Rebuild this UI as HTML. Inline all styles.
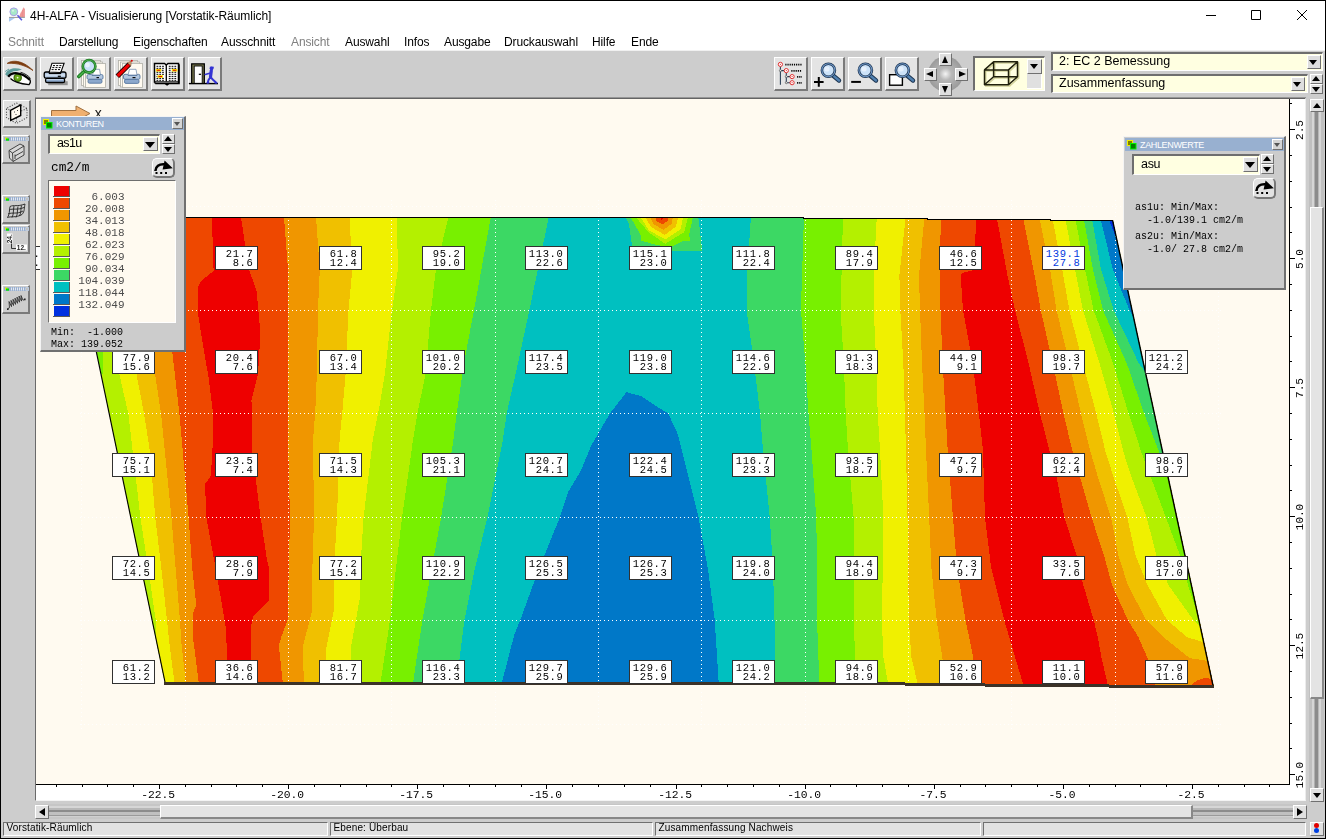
<!DOCTYPE html>
<html><head><meta charset="utf-8"><title>4H-ALFA</title>
<style>
html,body{margin:0;padding:0}
body{width:1326px;height:839px;position:relative;overflow:hidden;background:#fff;font-family:"Liberation Sans",sans-serif;color:#000}
div,span,svg{position:absolute;box-sizing:border-box}
.g{background:#cdcdcd}
.mi{top:33.5px;font-size:12px;line-height:16px;white-space:nowrap;letter-spacing:-0.12px}
.dis{color:#808080}
.rb{background:#dedede;border-top:1px solid #fff;border-left:1px solid #fff;border-right:2px solid #7a7a7a;border-bottom:2px solid #7a7a7a}
.rb1{background:#dedede;border-top:1px solid #fff;border-left:1px solid #fff;border-right:1px solid #707070;border-bottom:1px solid #707070}
.sunk{border-top:2px solid #6e6e6e;border-left:2px solid #6e6e6e;border-right:1px solid #fff;border-bottom:1px solid #fff}
.combo{background:#ffffe1;font-size:12.5px;white-space:nowrap}
.vb{width:43px;height:24px;background:#fff;border:1px solid #3a2e2e;font-family:"Liberation Mono",monospace;font-size:10.5px;letter-spacing:0.62px;line-height:9px;text-align:right;padding:3px 3.6px 0 0;white-space:nowrap;color:#000}
.vb.bl{color:#0038e0;filter:none}
.vb,.mono,.bl_,.rl_ span,.mi,#ttl,.stt,.combo span{filter:grayscale(1)}
.mono{font-family:"Liberation Mono",monospace;white-space:pre}
.tk{width:1px;background:#000}
.tkr{height:1px;background:#000}
.bl_{width:60px;text-align:center;font-family:"Liberation Mono",monospace;font-size:11.3px;line-height:12px;white-space:pre}
.rl_{width:0;height:0}
.rl_ span{display:block;left:-30px;top:-6px;width:60px;height:12px;text-align:center;font-family:"Liberation Mono",monospace;font-size:11px;line-height:12px;transform:rotate(-90deg);white-space:pre}
.arr{width:0;height:0;border-style:solid}
.ptitle{background:#98b0d0;color:#fff;font-size:9px;line-height:12px;white-space:nowrap;letter-spacing:-0.35px}
</style></head><body>
<!-- title bar -->
<div style="left:0;top:0;width:1326px;height:839px;border:1px solid #000;z-index:50;pointer-events:none"></div>
<svg style="left:0px;top:0px" width="30" height="30" viewBox="0 0 30 30"><polygon points="9,17.900 15,17.900 9,21.800" fill="#a8c8f0"/><polygon points="18.800,17 23.500,7.200 24.900,9 24.900,17" fill="#f0a0a0"/><path d="M21 12.500 V17 M22.500 10 V17 M24 9 V17" stroke="#e88080" stroke-width="0.600"/><path d="M9 17.400 H24.900" stroke="#8a8a8a" stroke-width="0.900"/><circle cx="13.800" cy="11.800" r="3.900" fill="#a8e8c8" stroke="#a8a0e8" stroke-width="1"/><circle cx="13" cy="10.800" r="1" fill="#d8f4e8"/><path d="M17.500 15.300 L21.900 20.200" stroke="#5858e0" stroke-width="1.600"/></svg>
<div id="ttl" style="left:30px;top:8px;font-size:12px;line-height:16px;white-space:nowrap;letter-spacing:-0.04px">4H-ALFA - Visualisierung [Vorstatik-Räumlich]</div>
<svg style="left:1200px;top:5px" width="115" height="22" viewBox="0 0 115 22"><path d="M6 10.5 H16 M51.5 5.5 H60.5 V14.5 H51.5 Z M97 5 L107 15 M107 5 L97 15" fill="none" stroke="#000" stroke-width="1"/></svg>
<!-- menu -->
<div class="mi dis" id="m0" style="left:8px">Schnitt</div>
<div class="mi" id="m1" style="left:59px">Darstellung</div>
<div class="mi" id="m2" style="left:133px">Eigenschaften</div>
<div class="mi" id="m3" style="left:221px">Ausschnitt</div>
<div class="mi dis" id="m4" style="left:291px">Ansicht</div>
<div class="mi" id="m5" style="left:345px">Auswahl</div>
<div class="mi" id="m6" style="left:404px">Infos</div>
<div class="mi" id="m7" style="left:444px">Ausgabe</div>
<div class="mi" id="m8" style="left:504px">Druckauswahl</div>
<div class="mi" id="m9" style="left:592px">Hilfe</div>
<div class="mi" id="m10" style="left:631px">Ende</div>
<!-- grey chrome -->
<div class="g" style="left:1px;top:51px;width:1324px;height:787px"></div>
<div style="left:1px;top:50px;width:1324px;height:1px;background:#f0f0f0"></div>
<!-- toolbar buttons -->
<div class="rb" style="left:3px;top:57px;width:34px;height:34px;background:#e4e4e4"><svg width="34" height="34" viewBox="0 0 34 34" style="left:-1px;top:-1px">
<path d="M4.200 6.400 C9 3 19 2.500 30 13.500 C24 9.500 15 5.500 4.200 6.400 Z" fill="#7c3c10" stroke="#7c3c10" stroke-width="0.800"/>
<path d="M2.500 16.500 C6 10.500 13 10.500 19 12.500 L14 14 C10 13.500 7 15.500 4 19.500 Z" fill="#5c9c9c"/>
<path d="M2.200 14.500 L6 12 M2.500 17.500 L7 13.500" stroke="#5c9c9c" stroke-width="1"/>
<path d="M7.500 21.300 C11 16.500 19 16 27 22.800 C27.600 25 27 26.800 26 27.600 C19 27 12 25.500 7.500 21.300 Z" fill="#fff"/>
<circle cx="14.700" cy="20.800" r="3.600" fill="#68a818" stroke="#3c6c08" stroke-width="1.300"/><circle cx="14.600" cy="20.600" r="0.900" fill="#f0f8e0"/>
<path d="M5.200 19.800 C9 14.600 18 14.600 27 22.800" fill="none" stroke="#000" stroke-width="2.300"/>
<path d="M7.500 21.500 C11 25.300 19 27 26 27.700 C27.300 26.500 27.700 24.500 27 22.800" fill="none" stroke="#000" stroke-width="1.200"/>
<path d="M17.500 15.300 C21.500 16.300 25 18.500 27.500 21.300" fill="none" stroke="#000" stroke-width="0.900"/>
</svg></div>
<div class="rb" style="left:40px;top:57px;width:34px;height:34px;background:#e4e4e4"><svg width="34" height="34" viewBox="0 0 34 34" style="left:-1px;top:-1px">
<path d="M7 23 H26.500 V27 H7 Z" fill="#000" opacity=".35" transform="translate(1.200,1.200)"/>
<polygon points="12,6.200 24.100,6.200 20.800,15.500 9.200,15" fill="#fff" stroke="#000" stroke-width="1.100"/>
<path d="M13 8.600 H22 M12.300 10.600 H21.300 M11.600 12.600 H20.600" stroke="#000" stroke-width="1" stroke-dasharray="2 1.200"/>
<path d="M6 15 H9 L9.500 16.500 H20.500 L21 15 H24 Q26 15 26 17 V19.500 Q26 21.200 24 21.200 H6 Q4.200 21.200 4.200 19.500 V17 Q4.200 15 6 15 Z" fill="#b4c8e0" stroke="#000" stroke-width="1.300"/>
<path d="M5.500 18 H25" stroke="#dce8f4" stroke-width="1.200"/>
<rect x="5.600" y="21.300" width="19" height="4.200" rx="1.600" fill="#8ca8cc" stroke="#000" stroke-width="1.300"/>
<path d="M6.500 22.600 H23.500" stroke="#c4d4e8" stroke-width="1"/>
<path d="M17.800 19.300 H20.800" stroke="#000" stroke-width="1.200"/>
</svg></div>
<div class="rb" style="left:77px;top:57px;width:34px;height:34px;background:#e4e4e4"><svg width="34" height="34" viewBox="0 0 34 34" style="left:-1px;top:-1px">
<rect x="4.500" y="3.500" width="19" height="25" fill="#fffaf0" stroke="#b0b0a8" stroke-width="0.800"/><rect x="6.500" y="5" width="19" height="25" fill="#fffaf0" stroke="#b0b0a8" stroke-width="0.800"/><rect x="8.500" y="6.500" width="20" height="24" fill="#fffaf0" stroke="#b0b0a8" stroke-width="0.800"/>
<polygon points="17,12.300 22.600,12.300 23.500,18 15.500,18" fill="#fff" stroke="#7890b0" stroke-width="0.800"/>
<path d="M11.500 17.500 H14.500 L15 18.500 H23 L23.500 17.500 H24.500 Q26 17.500 26 19 V21 Q26 22.300 24.500 22.300 H11.500 Q10 22.300 10 21 V19 Q10 17.500 11.500 17.500 Z" fill="#b4c8e0" stroke="#5878a0" stroke-width="0.900"/>
<rect x="11" y="22.400" width="14" height="3.800" rx="1.500" fill="#8ca8cc" stroke="#5878a0" stroke-width="0.900"/>
<path d="M19.500 20.600 H22" stroke="#000" stroke-width="1.100"/>
<path d="M6.800 14.800 L1.800 19.500" stroke="#1c7c24" stroke-width="3.600" stroke-linecap="round"/><path d="M6.800 14.800 L2 19.300" stroke="#48b048" stroke-width="1.600" stroke-linecap="round"/>
<circle cx="12.100" cy="9.300" r="6.300" fill="#c8e0f8" stroke="#1c7c24" stroke-width="2.600"/><circle cx="12.100" cy="9.300" r="6.300" fill="none" stroke="#58b858" stroke-width="0.900"/><circle cx="10.500" cy="8" r="2.400" fill="#e8f2fc"/>
</svg></div>
<div class="rb" style="left:114px;top:57px;width:34px;height:34px;background:#e4e4e4"><svg width="34" height="34" viewBox="0 0 34 34" style="left:-1px;top:-1px">
<rect x="4.500" y="3.500" width="19" height="25" fill="#fffaf0" stroke="#b0b0a8" stroke-width="0.800"/><rect x="6.500" y="5" width="19" height="25" fill="#fffaf0" stroke="#b0b0a8" stroke-width="0.800"/><rect x="8.500" y="6.500" width="20" height="24" fill="#fffaf0" stroke="#b0b0a8" stroke-width="0.800"/>
<polygon points="15.500,12.300 22,12.300 23,18 14,18" fill="#fff" stroke="#7890b0" stroke-width="0.800"/>
<path d="M11 17.300 H13.500 L14 18.500 H23 L23.500 17.300 H24.500 Q26 17.300 26 19 V21 Q26 22.300 24.500 22.300 H11 Q9.500 22.300 9.500 21 V19 Q9.500 17.300 11 17.300 Z" fill="#b4c8e0" stroke="#5878a0" stroke-width="0.900"/>
<rect x="10.500" y="22.400" width="14.500" height="4" rx="1.500" fill="#8ca8cc" stroke="#5878a0" stroke-width="0.900"/>
<path d="M18.500 20.600 H21.500" stroke="#000" stroke-width="1.100"/>
<path d="M3.300 19.300 L15.300 7.300" stroke="#000" stroke-width="5"/><path d="M3.600 19 L15 7.600" stroke="#ee0000" stroke-width="3.400"/>
<polygon points="13.500,5.800 17.200,4 17,8.800" fill="#d8a070" stroke="#805030" stroke-width="0.500"/><circle cx="17.800" cy="3.800" r="1" fill="#e00000"/>
</svg></div>
<div class="rb" style="left:151px;top:57px;width:34px;height:34px;background:#e4e4e4"><svg width="34" height="34" viewBox="0 0 34 34" style="left:-1px;top:-1px">
<path d="M3.500 6.500 H13.500 L15.300 8 L17 6.500 H28 V26.500 H17.500 L15.300 28 L13 26.500 H3.500 Z" fill="#000" transform="translate(0.800,0.800)"/>
<path d="M3.500 6.500 H13.500 L15.300 8 L17 6.500 H27.500 V25 H3.500 Z" fill="#fff" stroke="#000" stroke-width="1.500"/><path d="M15.300 8 V27" stroke="#000" stroke-width="1.300"/><path d="M3.500 25.700 H27.800" stroke="#000" stroke-width="2"/><path d="M4.500 25.200 H26.800" stroke="#bbb" stroke-width="0.800"/>
<rect x="4.800" y="12" width="5.500" height="2.600" fill="#ffee00"/><rect x="6.500" y="18.200" width="5.500" height="2.600" fill="#ffee00"/><rect x="20.800" y="12" width="5.500" height="2.600" fill="#ffee00"/>
<path d="M5.500 9.300 H13 M5.500 11.300 H13 M10.800 13.300 H13 M5.500 15.300 H13 M5.500 17.300 H13 M5.500 19.400 H6.300 M5.500 21.400 H13 M5.500 23.300 H13 M17.800 9.300 H25.500 M17.800 11.300 H25.500 M17.800 13.300 H20.500 M17.800 15.300 H25.500 M17.800 17.300 H25.500 M17.800 19.400 H25.500 M17.800 21.400 H25.500 M17.800 23.300 H25.500" stroke="#000" stroke-width="1" stroke-dasharray="1.800 1"/>
<path d="M5.800 13.300 H9.300 M7.500 19.500 H11 M21.800 13.300 H25.300" stroke="#e00000" stroke-width="1.100"/>
</svg></div>
<div class="rb" style="left:188px;top:57px;width:34px;height:34px;background:#e4e4e4"><svg width="34" height="34" viewBox="0 0 34 34" style="left:-1px;top:-1px">
<path d="M3.700 26.400 V6.800 H16.300 V26.400" fill="#7c7c50" stroke="#000" stroke-width="1.300"/>
<rect x="6.200" y="9" width="8" height="17.400" fill="#fff" stroke="#000" stroke-width="0.900"/>
<path d="M10.800 17.300 H13" stroke="#000" stroke-width="1.200"/>
<path d="M0.900 26.600 H30" stroke="#000" stroke-width="1.400"/>
<g fill="none" stroke="#3434d4" stroke-linecap="round" stroke-linejoin="round"><path d="M23.300 13.500 L22.500 20" stroke-width="3.200"/><path d="M22.600 16 L17.200 17.400" stroke-width="1.500"/><path d="M22.500 20 L20.500 23 L19.800 25.600 M22.500 20 L25.500 23.300 L28 25.500" stroke-width="2"/><path d="M19 25.800 H21 M27 25.800 H29" stroke-width="1.200"/></g>
<circle cx="23.600" cy="11.300" r="1.900" fill="#3434d4"/><path d="M21.800 10.300 H25.800" stroke="#3434d4" stroke-width="1.200"/>
</svg></div>
<!-- right side toolbar -->
<div class="rb" style="left:774px;top:57px;width:34px;height:34px;background:#e4e4e4"><svg width="34" height="34" viewBox="0 0 34 34" style="left:-1px;top:-1px"><path d="M6.400 9.500 V27.800 M6.400 13.600 H10 M12.300 16 V25.700 M12.300 19.600 H16 M12.300 25.700 H16" stroke="#2c4058" stroke-width="1.100" fill="none"/>
<g fill="#fff" stroke="#e03030" stroke-width="1"><circle cx="6.400" cy="7.400" r="2.100"/><circle cx="12.300" cy="13.600" r="2.100"/><circle cx="18.100" cy="19.600" r="2.100"/><circle cx="18.100" cy="25.700" r="2.100"/></g>
<g fill="#e03030"><rect x="5.900" y="6.900" width="1" height="1"/><rect x="11.800" y="13.100" width="1" height="1"/><rect x="17.600" y="19.100" width="1" height="1"/><rect x="17.600" y="25.200" width="1" height="1"/></g>
<g fill="#fff" stroke="#555" stroke-width="0.700"><circle cx="6.400" cy="13.600" r="1"/><circle cx="12.300" cy="19.600" r="1"/><circle cx="12.300" cy="25.700" r="1"/></g>
<path d="M11.300 7.600 H28 M17.300 13.800 H28 M23.100 19.800 H28 M23.100 25.900 H28" stroke="#000" stroke-width="1.800" stroke-dasharray="1.200 0.950"/></svg></div>
<div class="rb" style="left:811px;top:57px;width:34px;height:34px;background:#e4e4e4"><svg width="34" height="34" viewBox="0 0 34 34" style="left:-1px;top:-1px"><path d="M22.300 18.700 L28 23.500" stroke="#1c3450" stroke-width="4.400" stroke-linecap="round"/><path d="M22.300 18.700 L28 23.500" stroke="#5080b0" stroke-width="2.400" stroke-linecap="round"/>
<circle cx="17.400" cy="13.200" r="6.500" fill="#cce2f8" stroke="#1c3450" stroke-width="2.600"/><circle cx="17.400" cy="13.200" r="6.500" fill="none" stroke="#7098c8" stroke-width="1.100"/><circle cx="16" cy="12" r="2.600" fill="#e6f0fc"/><path d="M3 24.900 H12.600 M7.800 20.100 V29.800" stroke="#000" stroke-width="2"/></svg></div>
<div class="rb" style="left:848px;top:57px;width:34px;height:34px;background:#e4e4e4"><svg width="34" height="34" viewBox="0 0 34 34" style="left:-1px;top:-1px"><path d="M22.300 18.700 L28 23.500" stroke="#1c3450" stroke-width="4.400" stroke-linecap="round"/><path d="M22.300 18.700 L28 23.500" stroke="#5080b0" stroke-width="2.400" stroke-linecap="round"/>
<circle cx="17.400" cy="13.200" r="6.500" fill="#cce2f8" stroke="#1c3450" stroke-width="2.600"/><circle cx="17.400" cy="13.200" r="6.500" fill="none" stroke="#7098c8" stroke-width="1.100"/><circle cx="16" cy="12" r="2.600" fill="#e6f0fc"/><path d="M3.200 24.900 H12.900" stroke="#000" stroke-width="2"/></svg></div>
<div class="rb" style="left:885px;top:57px;width:34px;height:34px;background:#e4e4e4"><svg width="34" height="34" viewBox="0 0 34 34" style="left:-1px;top:-1px"><rect x="4.600" y="17.700" width="12.800" height="10.500" fill="#fff" stroke="#000" stroke-width="1.400"/><path d="M22.300 18.700 L28 23.500" stroke="#1c3450" stroke-width="4.400" stroke-linecap="round"/><path d="M22.300 18.700 L28 23.500" stroke="#5080b0" stroke-width="2.400" stroke-linecap="round"/>
<circle cx="17.400" cy="13.200" r="6.500" fill="#cce2f8" stroke="#1c3450" stroke-width="2.600"/><circle cx="17.400" cy="13.200" r="6.500" fill="none" stroke="#7098c8" stroke-width="1.100"/><circle cx="16" cy="12" r="2.600" fill="#e6f0fc"/></svg></div>
<!-- nav pad -->
<svg style="left:924px;top:52px" width="44" height="44" viewBox="0 0 44 44"><defs><radialGradient id="rg"><stop offset="0" stop-color="#f4f4f4"/><stop offset=".35" stop-color="#b8b8b8"/><stop offset="1" stop-color="#9a9a9a"/></radialGradient></defs><circle cx="21.500" cy="22" r="17.500" fill="url(#rg)"/></svg>
<div class="rb1" style="left:939px;top:53px;width:13px;height:13px"></div><div class="arr" style="left:942px;top:56px;border-width:0 3.500px 7px 3.500px;border-color:transparent transparent #000 transparent"></div>
<div class="rb1" style="left:939px;top:83px;width:13px;height:13px"></div><div class="arr" style="left:942px;top:86px;border-width:7px 3.500px 0 3.500px;border-color:#000 transparent transparent transparent"></div>
<div class="rb1" style="left:924px;top:68px;width:13px;height:13px"></div><div class="arr" style="left:926px;top:71px;border-width:3.500px 7px 3.500px 0;border-color:transparent #000 transparent transparent"></div>
<div class="rb1" style="left:955px;top:68px;width:13px;height:13px"></div><div class="arr" style="left:959px;top:71px;border-width:3.500px 0 3.500px 7px;border-color:transparent transparent transparent #000"></div>
<!-- 3D box selector -->
<div class="sunk" style="left:973px;top:56px;width:72px;height:35px;background:#ffffe1"></div>
<svg style="left:982px;top:59px" width="40" height="30" viewBox="0 0 40 30"><path d="M2.500 10.900 H26.500 V25.800 H2.500 Z M11.600 2.700 H35.500 V17.700 H11.600 Z M2.500 10.900 L11.600 2.700 M26.500 10.900 L35.500 2.700 M26.500 25.800 L35.500 17.700 M2.500 25.800 L11.600 17.700" fill="none" stroke="#d4d49c" stroke-width="1.500" transform="translate(1.200,1.200)"/><path d="M2.500 10.900 H26.500 V25.800 H2.500 Z M11.600 2.700 H35.500 V17.700 H11.600 Z M2.500 10.900 L11.600 2.700 M26.500 10.900 L35.500 2.700 M26.500 25.800 L35.500 17.700 M2.500 25.800 L11.600 17.700" fill="none" stroke="#20200c" stroke-width="1.500" stroke-linejoin="round"/></svg>
<div class="rb1" style="left:1027px;top:59px;width:15px;height:15px"></div><div class="arr" style="left:1030px;top:64px;border-width:5px 4.500px 0 4.500px;border-color:#000 transparent transparent transparent"></div>
<div style="left:1027px;top:74px;width:15px;height:15px;background:#e0e0e0;border-right:1px solid #fff;border-bottom:1px solid #fff"></div>
<!-- combos -->
<div class="sunk combo" style="left:1051px;top:52px;width:272px;height:19px"><span style="left:6px;top:-1px;line-height:16px" id="cb1">2: EC 2 Bemessung</span></div>
<div class="rb1" style="left:1307px;top:55px;width:14px;height:14px"></div><div class="arr" style="left:1309px;top:60px;border-width:5px 4.500px 0 4.500px;border-color:#000 transparent transparent transparent"></div>
<div class="sunk combo" style="left:1051px;top:74px;width:257px;height:19px"><span style="left:6px;top:-1px;line-height:16px" id="cb2">Zusammenfassung</span></div>
<div class="rb1" style="left:1291px;top:77px;width:14px;height:14px"></div><div class="arr" style="left:1293px;top:82px;border-width:5px 4.500px 0 4.500px;border-color:#000 transparent transparent transparent"></div>
<div class="rb1" style="left:1310px;top:74px;width:13px;height:10px"></div><div class="arr" style="left:1312px;top:76px;border-width:0 4.500px 5px 4.500px;border-color:transparent transparent #000 transparent"></div>
<div class="rb1" style="left:1310px;top:84px;width:13px;height:10px"></div><div class="arr" style="left:1312px;top:87px;border-width:5px 4.500px 0 4.500px;border-color:#000 transparent transparent transparent"></div>

<!-- canvas -->
<div style="left:35px;top:97px;width:1271px;height:704px;background:#fff;border-top:2px solid #646464;border-left:1px solid #6a6a6a;border-right:1px solid #ececec;border-bottom:1px solid #f4f4f4"></div>
<div style="left:35px;top:97px;width:1271px;height:1px;background:#969696"></div>
<div style="left:36px;top:99px;width:1253px;height:685px;background:#fffaf0;overflow:hidden" id="cv">
<svg style="left:-36px;top:-99px" width="1326" height="839" viewBox="0 0 1326 839" shape-rendering="crispEdges">
<defs><clipPath id="q"><polygon points="68.5,217 803,217 803,218 927,218 927,219 1050,219 1050,220 1112.6,220 1213.6,687 1213.6,688 1109,688 1109,687 985,687 985,686 905,686 905,685 165.4,685"/></clipPath></defs>
<g stroke="#fff" stroke-width="1" stroke-dasharray="1 3" fill="none" opacity=".9"><line x1="81.5" y1="200" x2="81.5" y2="730" /><line x1="185.5" y1="200" x2="185.5" y2="730" /><line x1="288.5" y1="200" x2="288.5" y2="730" /><line x1="391.5" y1="200" x2="391.5" y2="730" /><line x1="495.5" y1="200" x2="495.5" y2="730" /><line x1="598.5" y1="200" x2="598.5" y2="730" /><line x1="701.5" y1="200" x2="701.5" y2="730" /><line x1="805.5" y1="200" x2="805.5" y2="730" /><line x1="908.5" y1="200" x2="908.5" y2="730" /><line x1="1011.5" y1="200" x2="1011.5" y2="730" /><line x1="1115.5" y1="200" x2="1115.5" y2="730" /><line x1="1218.5" y1="200" x2="1218.5" y2="730" /><line x1="80" y1="206.5" x2="1222" y2="206.5" /><line x1="80" y1="310.5" x2="1222" y2="310.5" /><line x1="80" y1="413.5" x2="1222" y2="413.5" /><line x1="80" y1="517.5" x2="1222" y2="517.5" /><line x1="80" y1="620.5" x2="1222" y2="620.5" /><line x1="80" y1="724.5" x2="1222" y2="724.5" /></g>
<g clip-path="url(#q)">
<rect x="50" y="200" width="1200" height="500" fill="#78f000"/>
<polygon points="75.0,205.0 75.0,216.0 102.8,353.0 102.8,372.0 98.0,400.0 98.0,695.0 1260.0,695.0 1260.0,205.0" fill="#b4f000"/>
<polygon points="82.9,205.0 82.9,216.0 114.4,353.0 120.4,379.0 128.3,413.4 140.5,518.0 148.1,568.0 155.8,620.4 156.0,638.0 150.0,650.0 150.0,695.0 1260.0,695.0 1260.0,205.0" fill="#f0f000"/>
<polygon points="106.4,205.0 106.4,216.0 132.4,353.0 137.4,379.0 144.0,413.4 150.0,452.0 155.3,518.0 161.3,568.0 167.0,620.4 169.0,640.0 174.4,682.4 174.4,695.0 1260.0,695.0 1260.0,205.0" fill="#f0c000"/>
<polygon points="131.4,205.0 131.4,216.0 151.9,353.0 155.8,379.0 161.0,413.4 171.5,518.0 175.6,568.0 180.0,620.4 181.1,640.0 185.8,682.4 185.8,695.0 1260.0,695.0 1260.0,205.0" fill="#f09600"/>
<polygon points="156.5,205.0 156.5,216.0 172.4,353.0 175.4,379.0 179.4,413.4 188.7,518.0 192.2,568.0 196.3,605.0 193.4,612.0 193.3,640.0 198.7,682.4 198.7,695.0 1260.0,695.0 1260.0,205.0" fill="#ee4800"/>
<polygon points="211.8,205.0 211.8,216.0 213.6,270.9 200.7,281.4 197.6,287.5 197.6,311.6 204.3,353.0 208.2,375.0 213.0,413.4 213.0,440.0 210.8,476.0 205.0,484.0 206.5,518.0 215.6,568.0 222.0,605.0 226.3,631.0 226.8,660.0 226.8,695.0 1260.0,695.0 1260.0,205.0" fill="#ee0000"/>
<polygon points="240.8,205.0 240.8,216.0 248.9,269.4 256.5,290.5 260.4,332.7 259.3,353.0 258.0,374.0 251.4,400.0 252.2,413.0 252.0,450.0 260.7,518.0 267.0,560.0 269.2,568.0 269.2,600.0 253.0,616.8 250.6,629.0 251.1,660.0 251.1,695.0 1260.0,695.0 1260.0,205.0" fill="#ee4800"/>
<polygon points="283.9,205.0 283.9,216.0 288.0,269.0 288.0,310.0 288.0,375.0 288.0,440.0 290.0,518.0 288.8,568.0 287.6,620.0 281.6,636.0 278.8,645.0 282.8,683.0 282.8,695.0 1260.0,695.0 1260.0,205.0" fill="#f09600"/>
<polygon points="315.9,205.0 315.9,216.0 319.8,269.0 318.0,310.0 316.8,375.0 315.3,411.0 313.0,440.0 314.0,518.0 312.4,568.0 312.4,610.0 302.5,647.6 304.0,683.0 304.0,695.0 1260.0,695.0 1260.0,205.0" fill="#f0c000"/>
<polygon points="349.4,205.0 349.4,216.0 352.4,269.0 348.5,310.0 345.5,375.0 342.4,411.0 339.6,440.0 337.0,518.0 334.0,568.0 334.0,610.0 326.3,647.6 326.3,695.0 1260.0,695.0 1260.0,205.0" fill="#f0f000"/>
<polygon points="396.7,205.0 396.7,216.0 398.0,269.0 392.0,310.0 384.7,375.0 378.6,411.0 372.8,440.0 363.5,518.0 360.4,568.0 360.4,595.0 350.5,650.0 351.0,683.0 351.0,695.0 1260.0,695.0 1260.0,205.0" fill="#b4f000"/>
<polygon points="448.6,205.0 448.6,216.0 436.0,269.0 431.0,310.0 425.4,375.0 417.9,411.0 413.0,440.0 402.0,518.0 396.0,568.0 390.0,620.0 380.5,683.0 380.0,695.0 1260.0,695.0 1260.0,205.0" fill="#78f000"/>
<polygon points="491.0,205.0 491.0,216.0 474.0,310.0 464.0,363.0 457.0,411.0 453.4,440.0 441.0,518.0 431.7,568.0 422.4,620.0 413.0,683.0 412.0,695.0 1260.0,695.0 1260.0,205.0" fill="#3cd864"/>
<polygon points="549.0,205.0 549.0,216.0 529.4,310.0 518.0,363.0 506.8,413.0 502.0,445.0 487.3,518.0 475.0,568.0 464.4,620.0 456.5,683.0 456.0,695.0 1260.0,695.0 1260.0,205.0" fill="#00c0c0"/>
<polygon points="751.0,205.0 751.0,216.0 747.0,275.0 746.6,310.0 754.0,363.0 760.0,413.0 763.0,450.0 769.8,518.0 773.0,568.0 774.5,620.0 774.5,695.0 1260.0,695.0 1260.0,205.0" fill="#3cd864"/>
<polygon points="804.0,205.0 804.0,216.0 800.9,310.0 805.4,363.0 808.4,413.0 811.5,450.0 816.3,518.0 817.0,568.0 817.0,620.0 819.4,683.0 819.4,695.0 1260.0,695.0 1260.0,205.0" fill="#78f000"/>
<polygon points="843.0,205.0 843.0,216.0 841.5,275.0 840.5,310.0 843.8,363.0 845.7,413.0 848.0,450.0 853.7,518.0 854.0,568.0 854.0,620.0 854.9,657.0 857.6,683.0 858.0,695.0 1260.0,695.0 1260.0,205.0" fill="#b4f000"/>
<polygon points="876.8,205.0 876.8,216.0 873.8,275.0 873.8,310.0 876.2,363.0 877.7,413.0 880.0,450.0 883.4,518.0 882.8,568.0 881.8,620.0 883.4,657.0 888.0,683.0 889.0,695.0 1260.0,695.0 1260.0,205.0" fill="#f0f000"/>
<polygon points="905.8,205.0 905.8,216.0 899.4,275.0 900.3,310.0 903.3,363.0 904.9,413.0 906.0,450.0 907.5,518.0 908.2,568.0 908.8,620.0 911.3,657.0 917.5,683.0 918.5,695.0 1260.0,695.0 1260.0,205.0" fill="#f0c000"/>
<polygon points="924.5,205.0 924.5,216.0 919.0,275.0 920.0,310.0 922.0,363.0 924.5,413.0 926.0,450.0 929.2,518.0 931.4,568.0 936.7,620.0 942.2,657.0 947.0,683.0 948.0,695.0 1260.0,695.0 1260.0,205.0" fill="#f09600"/>
<polygon points="941.0,205.0 941.0,216.0 939.5,275.0 940.5,310.0 942.6,363.0 945.6,413.0 947.7,450.0 953.0,518.0 957.0,568.0 965.5,620.0 973.2,657.0 976.3,683.0 977.0,695.0 1260.0,695.0 1260.0,205.0" fill="#ee4800"/>
<polygon points="976.3,205.0 976.3,216.0 974.0,270.0 962.0,273.0 960.7,276.0 963.0,310.0 972.7,363.0 978.8,413.0 983.0,450.0 985.0,518.0 991.2,568.0 1004.2,620.0 1015.0,657.0 1022.8,683.0 1024.0,695.0 1260.0,695.0 1260.0,205.0" fill="#ee0000"/>
<polygon points="996.5,205.0 996.5,216.0 1007.4,275.0 1015.0,310.0 1028.5,363.0 1040.0,413.6 1050.0,452.9 1056.5,477.3 1064.4,517.3 1076.7,556.0 1083.3,585.0 1093.7,620.0 1097.7,637.0 1101.6,658.0 1108.0,686.0 1109.0,695.0 1260.0,695.0 1260.0,205.0" fill="#ee4800"/>
<polygon points="1022.6,205.0 1022.6,216.0 1034.6,275.0 1040.7,310.0 1052.7,363.0 1063.5,413.6 1072.9,452.9 1080.1,477.3 1091.5,517.3 1104.2,556.0 1112.0,585.0 1127.8,620.0 1138.3,637.0 1147.5,658.0 1155.0,686.0 1156.0,695.0 1260.0,695.0 1260.0,205.0" fill="#f09600"/>
<polygon points="1039.0,205.0 1039.0,216.0 1050.0,269.3 1056.5,310.0 1069.3,363.0 1081.0,413.6 1090.8,452.9 1098.0,477.3 1110.9,517.3 1118.6,556.0 1127.8,585.0 1146.2,620.0 1163.2,637.0 1189.4,658.0 1208.0,661.0 1260.0,668.0 1260.0,668.0 1260.0,205.0" fill="#f0c000"/>
<polygon points="1052.0,205.0 1052.0,216.0 1062.2,269.3 1069.3,310.0 1082.8,363.0 1096.3,413.6 1105.8,452.9 1113.7,477.3 1127.3,517.3 1135.7,556.0 1147.5,585.0 1167.0,620.0 1186.8,637.0 1203.8,642.5 1260.0,650.0 1260.0,650.0 1260.0,205.0" fill="#f0f000"/>
<polygon points="1064.8,205.0 1064.8,216.0 1075.0,269.3 1082.9,310.0 1099.4,363.0 1114.0,413.6 1123.7,452.9 1131.6,477.3 1146.6,517.3 1156.6,556.0 1168.4,585.0 1193.3,620.0 1200.0,627.0 1260.0,635.0 1260.0,635.0 1260.0,205.0" fill="#b4f000"/>
<polygon points="1074.8,205.0 1074.8,216.0 1085.0,269.3 1093.6,310.0 1113.0,363.0 1128.7,413.6 1141.6,452.9 1150.9,477.3 1165.9,517.3 1180.2,556.0 1188.0,585.0 1194.7,606.0 1260.0,615.0 1260.0,615.0 1260.0,205.0" fill="#78f000"/>
<polygon points="1083.3,205.0 1083.3,216.0 1092.9,269.3 1102.9,310.0 1126.6,363.0 1144.2,413.6 1159.5,452.9 1163.0,457.0 1260.0,475.0 1260.0,475.0 1260.0,205.0" fill="#3cd864"/>
<polygon points="1091.5,205.0 1091.5,216.0 1101.0,269.3 1113.6,310.0 1138.6,363.0 1144.8,371.5 1260.0,390.0 1260.0,390.0 1260.0,205.0" fill="#00c0c0"/>
<polygon points="1099.8,205.0 1099.8,216.0 1112.9,269.4 1129.4,310.0 1132.5,316.0 1260.0,328.0 1260.0,328.0 1260.0,205.0" fill="#0078c8"/>
<polygon points="1107.6,205.0 1107.6,216.0 1113.0,230.0 1117.0,240.0 1260.0,250.0 1260.0,250.0 1260.0,205.0" fill="#0030e0"/>
<polygon points="626.5,392.2 641.0,396.0 659.0,408.0 668.0,413.3 677.2,432.3 680.0,443.0 698.6,517.5 707.9,568.6 714.7,619.7 718.7,683.0 719.0,695.0 500.0,695.0 501.8,683.0 514.2,635.0 520.4,619.7 539.0,568.6 559.8,517.5 567.8,492.7 580.8,471.0 591.0,446.0 610.0,413.3" fill="#0078c8"/>
<polygon points="624.9,216.0 629.0,224.0 632.0,245.7 633.0,251.0 702.3,251.4 698.2,216.0" fill="#3cd864"/>
<polygon points="629.9,216.0 641.2,235.8 641.2,240.7 656.0,244.8 665.0,246.4 672.4,246.2 682.8,241.2 690.5,241.2 689.1,234.9 693.2,216.0" fill="#78f000"/>
<polygon points="634.8,216.0 648.4,232.1 665.2,243.9 684.2,232.1 688.2,216.0" fill="#b4f000"/>
<polygon points="639.8,216.0 648.9,230.3 665.2,239.4 680.5,229.4 683.3,216.0" fill="#f0f000"/>
<polygon points="644.8,216.0 651.0,227.0 664.7,234.9 676.0,226.5 678.3,216.0" fill="#f0c000"/>
<polygon points="649.8,216.0 653.5,224.0 663.3,229.9 671.5,224.0 673.3,216.0" fill="#f09600"/>
<polygon points="654.8,216.0 656.5,221.0 662.4,224.5 667.5,221.0 668.8,216.0" fill="#ee4800"/>
<polygon points="658.8,216.0 662.0,220.3 664.7,216.0" fill="#ee0000"/>
<polygon points="1192,690 1192,684 1197,680.5 1204,678 1213,679 1216,690" fill="#ee4800"/>
<g stroke="#fff" stroke-width="1" stroke-dasharray="1 3" fill="none"><line x1="81.5" y1="200" x2="81.5" y2="730" /><line x1="185.5" y1="200" x2="185.5" y2="730" /><line x1="288.5" y1="200" x2="288.5" y2="730" /><line x1="391.5" y1="200" x2="391.5" y2="730" /><line x1="495.5" y1="200" x2="495.5" y2="730" /><line x1="598.5" y1="200" x2="598.5" y2="730" /><line x1="701.5" y1="200" x2="701.5" y2="730" /><line x1="805.5" y1="200" x2="805.5" y2="730" /><line x1="908.5" y1="200" x2="908.5" y2="730" /><line x1="1011.5" y1="200" x2="1011.5" y2="730" /><line x1="1115.5" y1="200" x2="1115.5" y2="730" /><line x1="1218.5" y1="200" x2="1218.5" y2="730" /><line x1="80" y1="206.5" x2="1222" y2="206.5" /><line x1="80" y1="310.5" x2="1222" y2="310.5" /><line x1="80" y1="413.5" x2="1222" y2="413.5" /><line x1="80" y1="517.5" x2="1222" y2="517.5" /><line x1="80" y1="620.5" x2="1222" y2="620.5" /><line x1="80" y1="724.5" x2="1222" y2="724.5" /></g>
</g>
<polyline points="68,217.5 500,217.5 803,217.5 803,218.5 927,218.5 927,219.5 1050,219.5 1050,220.5 1112.6,220.5" fill="none" stroke="#000" stroke-width="1"/>
<line x1="68.4" y1="217.5" x2="165.2" y2="683" stroke="#000" stroke-width="1.15" shape-rendering="auto"/>
<line x1="1112.6" y1="220.3" x2="1213.2" y2="686.3" stroke="#000" stroke-width="1.4" shape-rendering="auto"/>
<polygon points="164,682 905,682 905,683 985,683 985,684 1109,684 1109,685 1213.2,685 1214,688 1109,688 1109,687 985,687 985,686 905,686 905,685 164,685" fill="#3c3228"/>
<!-- arrow -->
<polygon points="51.5,110.5 76,110.5 76,106 90,113.5 76,121 76,116.5 51.5,116.5" fill="#f0b070" stroke="#a07040" stroke-width="1" shape-rendering="auto"/>

</svg>
<div style="left:-36px;top:-99px;width:1326px;height:839px">
<div class="vb" style="left:9px;top:246px">85.4<br>17.1</div>
<div class="vb" style="left:112px;top:246px">80.6<br>16.1</div>
<div class="vb" style="left:215px;top:246px">21.7<br>8.6</div>
<div class="vb" style="left:319px;top:246px">61.8<br>12.4</div>
<div class="vb" style="left:422px;top:246px">95.2<br>19.0</div>
<div class="vb" style="left:525px;top:246px">113.0<br>22.6</div>
<div class="vb" style="left:629px;top:246px">115.1<br>23.0</div>
<div class="vb" style="left:732px;top:246px">111.8<br>22.4</div>
<div class="vb" style="left:835px;top:246px">89.4<br>17.9</div>
<div class="vb" style="left:939px;top:246px">46.6<br>12.5</div>
<div class="vb bl" style="left:1042px;top:246px">139.1<br>27.8</div>
<div class="vb" style="left:112px;top:350px">77.9<br>15.6</div>
<div class="vb" style="left:215px;top:350px">20.4<br>7.6</div>
<div class="vb" style="left:319px;top:350px">67.0<br>13.4</div>
<div class="vb" style="left:422px;top:350px">101.0<br>20.2</div>
<div class="vb" style="left:525px;top:350px">117.4<br>23.5</div>
<div class="vb" style="left:629px;top:350px">119.0<br>23.8</div>
<div class="vb" style="left:732px;top:350px">114.6<br>22.9</div>
<div class="vb" style="left:835px;top:350px">91.3<br>18.3</div>
<div class="vb" style="left:939px;top:350px">44.9<br>9.1</div>
<div class="vb" style="left:1042px;top:350px">98.3<br>19.7</div>
<div class="vb" style="left:1145px;top:350px">121.2<br>24.2</div>
<div class="vb" style="left:112px;top:453px">75.7<br>15.1</div>
<div class="vb" style="left:215px;top:453px">23.5<br>7.4</div>
<div class="vb" style="left:319px;top:453px">71.5<br>14.3</div>
<div class="vb" style="left:422px;top:453px">105.3<br>21.1</div>
<div class="vb" style="left:525px;top:453px">120.7<br>24.1</div>
<div class="vb" style="left:629px;top:453px">122.4<br>24.5</div>
<div class="vb" style="left:732px;top:453px">116.7<br>23.3</div>
<div class="vb" style="left:835px;top:453px">93.5<br>18.7</div>
<div class="vb" style="left:939px;top:453px">47.2<br>9.7</div>
<div class="vb" style="left:1042px;top:453px">62.2<br>12.4</div>
<div class="vb" style="left:1145px;top:453px">98.6<br>19.7</div>
<div class="vb" style="left:112px;top:556px">72.6<br>14.5</div>
<div class="vb" style="left:215px;top:556px">28.6<br>7.9</div>
<div class="vb" style="left:319px;top:556px">77.2<br>15.4</div>
<div class="vb" style="left:422px;top:556px">110.9<br>22.2</div>
<div class="vb" style="left:525px;top:556px">126.5<br>25.3</div>
<div class="vb" style="left:629px;top:556px">126.7<br>25.3</div>
<div class="vb" style="left:732px;top:556px">119.8<br>24.0</div>
<div class="vb" style="left:835px;top:556px">94.4<br>18.9</div>
<div class="vb" style="left:939px;top:556px">47.3<br>9.7</div>
<div class="vb" style="left:1042px;top:556px">33.5<br>7.6</div>
<div class="vb" style="left:1145px;top:556px">85.0<br>17.0</div>
<div class="vb" style="left:112px;top:660px">61.2<br>13.2</div>
<div class="vb" style="left:215px;top:660px">36.6<br>14.6</div>
<div class="vb" style="left:319px;top:660px">81.7<br>16.7</div>
<div class="vb" style="left:422px;top:660px">116.4<br>23.3</div>
<div class="vb" style="left:525px;top:660px">129.7<br>25.9</div>
<div class="vb" style="left:629px;top:660px">129.6<br>25.9</div>
<div class="vb" style="left:732px;top:660px">121.0<br>24.2</div>
<div class="vb" style="left:835px;top:660px">94.6<br>18.9</div>
<div class="vb" style="left:939px;top:660px">52.9<br>10.6</div>
<div class="vb" style="left:1042px;top:660px">11.1<br>10.0</div>
<div class="vb" style="left:1145px;top:660px">57.9<br>11.6</div>
</div>
</div>
<div style="left:94.8px;top:106.3px;font-size:14px;line-height:14px;color:#201810;filter:grayscale(1)">x</div>
<!-- axes -->
<div style="left:36px;top:784px;width:1254px;height:1px;background:#000"></div>
<div style="left:1289px;top:99px;width:1px;height:686px;background:#000"></div>
<div class="tk" style="left:56px;top:785px;height:2px"></div><div class="tk" style="left:82px;top:785px;height:2px"></div><div class="tk" style="left:107px;top:785px;height:2px"></div><div class="tk" style="left:133px;top:785px;height:2px"></div><div class="tk" style="left:159px;top:785px;height:4px"></div><div class="tk" style="left:185px;top:785px;height:2px"></div><div class="tk" style="left:211px;top:785px;height:2px"></div><div class="tk" style="left:236px;top:785px;height:2px"></div><div class="tk" style="left:262px;top:785px;height:2px"></div><div class="tk" style="left:288px;top:785px;height:4px"></div><div class="tk" style="left:314px;top:785px;height:2px"></div><div class="tk" style="left:340px;top:785px;height:2px"></div><div class="tk" style="left:366px;top:785px;height:2px"></div><div class="tk" style="left:391px;top:785px;height:2px"></div><div class="tk" style="left:417px;top:785px;height:4px"></div><div class="tk" style="left:443px;top:785px;height:2px"></div><div class="tk" style="left:469px;top:785px;height:2px"></div><div class="tk" style="left:495px;top:785px;height:2px"></div><div class="tk" style="left:521px;top:785px;height:2px"></div><div class="tk" style="left:546px;top:785px;height:4px"></div><div class="tk" style="left:572px;top:785px;height:2px"></div><div class="tk" style="left:598px;top:785px;height:2px"></div><div class="tk" style="left:624px;top:785px;height:2px"></div><div class="tk" style="left:650px;top:785px;height:2px"></div><div class="tk" style="left:676px;top:785px;height:4px"></div><div class="tk" style="left:701px;top:785px;height:2px"></div><div class="tk" style="left:727px;top:785px;height:2px"></div><div class="tk" style="left:753px;top:785px;height:2px"></div><div class="tk" style="left:779px;top:785px;height:2px"></div><div class="tk" style="left:805px;top:785px;height:4px"></div><div class="tk" style="left:830px;top:785px;height:2px"></div><div class="tk" style="left:856px;top:785px;height:2px"></div><div class="tk" style="left:882px;top:785px;height:2px"></div><div class="tk" style="left:908px;top:785px;height:2px"></div><div class="tk" style="left:934px;top:785px;height:4px"></div><div class="tk" style="left:960px;top:785px;height:2px"></div><div class="tk" style="left:985px;top:785px;height:2px"></div><div class="tk" style="left:1011px;top:785px;height:2px"></div><div class="tk" style="left:1037px;top:785px;height:2px"></div><div class="tk" style="left:1063px;top:785px;height:4px"></div><div class="tk" style="left:1089px;top:785px;height:2px"></div><div class="tk" style="left:1115px;top:785px;height:2px"></div><div class="tk" style="left:1140px;top:785px;height:2px"></div><div class="tk" style="left:1166px;top:785px;height:2px"></div><div class="tk" style="left:1192px;top:785px;height:4px"></div><div class="tk" style="left:1218px;top:785px;height:2px"></div><div class="tk" style="left:1244px;top:785px;height:2px"></div><div class="tk" style="left:1269px;top:785px;height:2px"></div><div class="bl_" style="left:128.1px;top:788.6px">-22.5</div><div class="bl_" style="left:257.1px;top:788.6px">-20.0</div><div class="bl_" style="left:386.1px;top:788.6px">-17.5</div><div class="bl_" style="left:515.1px;top:788.6px">-15.0</div><div class="bl_" style="left:645.1px;top:788.6px">-12.5</div><div class="bl_" style="left:774.1px;top:788.6px">-10.0</div><div class="bl_" style="left:903.1px;top:788.6px">-7.5</div><div class="bl_" style="left:1032.1px;top:788.6px">-5.0</div><div class="bl_" style="left:1161.1px;top:788.6px">-2.5</div>
<div class="tkr" style="top:103px;left:1290px;width:2px"></div><div class="tkr" style="top:129px;left:1290px;width:5px"></div><div class="tkr" style="top:155px;left:1290px;width:2px"></div><div class="tkr" style="top:181px;left:1290px;width:2px"></div><div class="tkr" style="top:207px;left:1290px;width:2px"></div><div class="tkr" style="top:232px;left:1290px;width:2px"></div><div class="tkr" style="top:258px;left:1290px;width:5px"></div><div class="tkr" style="top:284px;left:1290px;width:2px"></div><div class="tkr" style="top:310px;left:1290px;width:2px"></div><div class="tkr" style="top:336px;left:1290px;width:2px"></div><div class="tkr" style="top:361px;left:1290px;width:2px"></div><div class="tkr" style="top:387px;left:1290px;width:5px"></div><div class="tkr" style="top:413px;left:1290px;width:2px"></div><div class="tkr" style="top:439px;left:1290px;width:2px"></div><div class="tkr" style="top:465px;left:1290px;width:2px"></div><div class="tkr" style="top:490px;left:1290px;width:2px"></div><div class="tkr" style="top:516px;left:1290px;width:5px"></div><div class="tkr" style="top:542px;left:1290px;width:2px"></div><div class="tkr" style="top:568px;left:1290px;width:2px"></div><div class="tkr" style="top:594px;left:1290px;width:2px"></div><div class="tkr" style="top:619px;left:1290px;width:2px"></div><div class="tkr" style="top:645px;left:1290px;width:5px"></div><div class="tkr" style="top:671px;left:1290px;width:2px"></div><div class="tkr" style="top:697px;left:1290px;width:2px"></div><div class="tkr" style="top:723px;left:1290px;width:2px"></div><div class="tkr" style="top:748px;left:1290px;width:2px"></div><div class="tkr" style="top:774px;left:1290px;width:5px"></div><div class="rl_" style="left:1299.5px;top:130.3px"><span>2.5</span></div><div class="rl_" style="left:1299.5px;top:259.3px"><span>5.0</span></div><div class="rl_" style="left:1299.5px;top:388.3px"><span>7.5</span></div><div class="rl_" style="left:1299.5px;top:517.3px"><span>10.0</span></div><div class="rl_" style="left:1299.5px;top:646.3px"><span>12.5</span></div><div class="rl_" style="left:1299.5px;top:775.3px"><span>15.0</span></div>
<div style="left:40px;top:116px;width:146px;height:236px;background:#cccccc;border-top:1px solid #f4f4f4;border-left:1px solid #f4f4f4;border-right:2px solid #707070;border-bottom:2px solid #707070"></div>
<div class="ptitle" style="left:41px;top:117px;width:143px;height:13px"><span style="left:15px;top:0.500px">KONTUREN</span></div>
<svg width="11" height="10" viewBox="0 0 11 10" style="left:43px;top:119px"><rect x="0.500" y="0.500" width="5" height="5" fill="#808000" stroke="#f0f000"/><rect x="3.500" y="3.500" width="5.500" height="5.500" fill="#008000" stroke="#00f000"/></svg>
<div class="rb1" style="left:172px;top:118px;width:11px;height:11px;background:#d4d4d4"></div><div class="arr" style="left:174px;top:122px;border-width:4px 3.5px 0 3.5px;border-color:#555 transparent transparent transparent"></div>
<div class="sunk combo" style="left:48px;top:134px;width:112px;height:20px"><span style="left:7px;top:-1px;line-height:16px;letter-spacing:-0.65px">as1u</span></div>
<div class="rb1" style="left:143px;top:137px;width:15px;height:14px"></div><div class="arr" style="left:145px;top:141.5px;border-width:6px 5.5px 0 5.5px;border-color:#000 transparent transparent transparent"></div>
<div class="rb1" style="left:162px;top:134px;width:13px;height:10px"></div><div class="arr" style="left:164px;top:136px;border-width:0 4.5px 5px 4.5px;border-color:transparent transparent #000 transparent"></div>
<div class="rb1" style="left:162px;top:144px;width:13px;height:10px"></div><div class="arr" style="left:164px;top:147px;border-width:5px 4.5px 0 4.5px;border-color:#000 transparent transparent transparent"></div>
<div class="mono" style="left:51px;top:161px;font-size:12.8px;line-height:14px">cm2/m</div>
<div style="left:152px;top:158px;width:23px;height:20px;background:#e2e2e2;border-radius:5px;border-top:1px solid #fff;border-left:1px solid #fff;border-right:2px solid #777;border-bottom:2px solid #777"><svg width="23" height="20" viewBox="0 0 23 20" style="left:-1px;top:-1px"><path d="M3.400 13 C3.600 8.500 7 5.800 12.500 6.300" fill="none" stroke="#000" stroke-width="2.600"/><polygon points="12.600,2.400 20.800,10.200 10.600,11.600" fill="#000"/><path d="M3.500 15 H5.500 M8.200 15 H10.200 M13 15 H15" stroke="#000" stroke-width="2"/></svg></div>
<div class="sunk" style="left:48px;top:180px;width:128px;height:143px;background:#fffaf0;border-top-width:1px;border-left-width:1px"></div>
<div style="left:54px;top:186px;width:16px;height:10px;background:#ee0000;border-right:1px solid #585858"></div><div style="left:53px;top:196px;width:17px;height:1px;background:#585858"></div>
<div style="left:54px;top:198px;width:16px;height:10px;background:#ee4800;border-right:1px solid #585858"></div><div style="left:53px;top:208px;width:17px;height:1px;background:#585858"></div>
<div style="left:54px;top:210px;width:16px;height:10px;background:#f09600;border-right:1px solid #585858"></div><div style="left:53px;top:220px;width:17px;height:1px;background:#585858"></div>
<div style="left:54px;top:222px;width:16px;height:10px;background:#f0c000;border-right:1px solid #585858"></div><div style="left:53px;top:232px;width:17px;height:1px;background:#585858"></div>
<div style="left:54px;top:234px;width:16px;height:10px;background:#f0f000;border-right:1px solid #585858"></div><div style="left:53px;top:244px;width:17px;height:1px;background:#585858"></div>
<div style="left:54px;top:246px;width:16px;height:10px;background:#b4f000;border-right:1px solid #585858"></div><div style="left:53px;top:256px;width:17px;height:1px;background:#585858"></div>
<div style="left:54px;top:258px;width:16px;height:10px;background:#78f000;border-right:1px solid #585858"></div><div style="left:53px;top:268px;width:17px;height:1px;background:#585858"></div>
<div style="left:54px;top:270px;width:16px;height:10px;background:#3cd864;border-right:1px solid #585858"></div><div style="left:53px;top:280px;width:17px;height:1px;background:#585858"></div>
<div style="left:54px;top:282px;width:16px;height:10px;background:#00c0c0;border-right:1px solid #585858"></div><div style="left:53px;top:292px;width:17px;height:1px;background:#585858"></div>
<div style="left:54px;top:294px;width:16px;height:10px;background:#0078c8;border-right:1px solid #585858"></div><div style="left:53px;top:304px;width:17px;height:1px;background:#585858"></div>
<div style="left:54px;top:306px;width:16px;height:10px;background:#0030e0;border-right:1px solid #585858"></div><div style="left:53px;top:316px;width:17px;height:1px;background:#585858"></div>
<div class="mono" style="left:64px;top:191px;width:60.500px;text-align:right;font-size:11px;line-height:12px;color:#4c4c4c">6.003</div>
<div class="mono" style="left:64px;top:203px;width:60.500px;text-align:right;font-size:11px;line-height:12px;color:#4c4c4c">20.008</div>
<div class="mono" style="left:64px;top:215px;width:60.500px;text-align:right;font-size:11px;line-height:12px;color:#4c4c4c">34.013</div>
<div class="mono" style="left:64px;top:227px;width:60.500px;text-align:right;font-size:11px;line-height:12px;color:#4c4c4c">48.018</div>
<div class="mono" style="left:64px;top:239px;width:60.500px;text-align:right;font-size:11px;line-height:12px;color:#4c4c4c">62.023</div>
<div class="mono" style="left:64px;top:251px;width:60.500px;text-align:right;font-size:11px;line-height:12px;color:#4c4c4c">76.029</div>
<div class="mono" style="left:64px;top:263px;width:60.500px;text-align:right;font-size:11px;line-height:12px;color:#4c4c4c">90.034</div>
<div class="mono" style="left:64px;top:275px;width:60.500px;text-align:right;font-size:11px;line-height:12px;color:#4c4c4c">104.039</div>
<div class="mono" style="left:64px;top:287px;width:60.500px;text-align:right;font-size:11px;line-height:12px;color:#4c4c4c">118.044</div>
<div class="mono" style="left:64px;top:299px;width:60.500px;text-align:right;font-size:11px;line-height:12px;color:#4c4c4c">132.049</div>
<div class="mono" style="left:51px;top:327px;font-size:10px;line-height:12px">Min:  -1.000</div>
<div class="mono" style="left:51px;top:339px;font-size:10px;line-height:12px">Max: 139.052</div>
<div style="left:1123px;top:136px;width:163px;height:154px;background:#cccccc;border-top:1px solid #f4f4f4;border-left:1px solid #f4f4f4;border-right:2px solid #707070;border-bottom:2px solid #707070"></div>
<div class="ptitle" style="left:1125px;top:138px;width:159px;height:13px"><span style="left:15px;top:0.500px">ZAHLENWERTE</span></div>
<svg width="11" height="10" viewBox="0 0 11 10" style="left:1127px;top:140px"><rect x="0.500" y="0.500" width="5" height="5" fill="#808000" stroke="#f0f000"/><rect x="3.500" y="3.500" width="5.500" height="5.500" fill="#008000" stroke="#00f000"/></svg>
<div class="rb1" style="left:1272px;top:139px;width:11px;height:11px;background:#d4d4d4"></div><div class="arr" style="left:1274px;top:143px;border-width:4px 3.5px 0 3.5px;border-color:#555 transparent transparent transparent"></div>
<div class="sunk combo" style="left:1132px;top:154px;width:128px;height:21px"><span style="left:7px;top:0px;line-height:16px;letter-spacing:-0.3px">asu</span></div>
<div class="rb1" style="left:1243px;top:157px;width:15px;height:15px"></div><div class="arr" style="left:1245px;top:162px;border-width:6px 5.5px 0 5.5px;border-color:#000 transparent transparent transparent"></div>
<div class="rb1" style="left:1261px;top:154px;width:13px;height:10px"></div><div class="arr" style="left:1263px;top:156px;border-width:0 4.5px 5px 4.5px;border-color:transparent transparent #000 transparent"></div>
<div class="rb1" style="left:1261px;top:164px;width:13px;height:10px"></div><div class="arr" style="left:1263px;top:167px;border-width:5px 4.5px 0 4.5px;border-color:#000 transparent transparent transparent"></div>
<div style="left:1253px;top:178px;width:23px;height:21px;background:#e2e2e2;border-radius:5px;border-top:1px solid #fff;border-left:1px solid #fff;border-right:2px solid #777;border-bottom:2px solid #777"><svg width="23" height="20" viewBox="0 0 23 20" style="left:-1px;top:-1px"><path d="M3.400 13 C3.600 8.500 7 5.800 12.500 6.300" fill="none" stroke="#000" stroke-width="2.600"/><polygon points="12.600,2.400 20.800,10.200 10.600,11.600" fill="#000"/><path d="M3.500 15 H5.500 M8.200 15 H10.200 M13 15 H15" stroke="#000" stroke-width="2"/></svg></div>
<div class="mono" style="left:1135px;top:202px;font-size:10px;line-height:12px">as1u: Min/Max:</div>
<div class="mono" style="left:1147px;top:215px;font-size:10px;line-height:12px">-1.0/139.1 cm2/m</div>
<div class="mono" style="left:1135px;top:230.5px;font-size:10px;line-height:12px">as2u: Min/Max:</div>
<div class="mono" style="left:1147px;top:244px;font-size:10px;line-height:12px">-1.0/ 27.8 cm2/m</div>
<div class="rb" style="left:3px;top:100px;width:28px;height:28px;background:#e2e2e2"><svg width="27" height="27" viewBox="0 0 27 27" style="left:-1px;top:-1px"><g fill="none"><path d="M13.500 3 L24 8.500 V17.500 L13.500 23.500 L3.500 17.500 V8.500 Z M13.500 13 L13.500 23.500 M13.500 13 L3.500 8.500 M13.500 13 L24 8.500" stroke="#444" stroke-width="1.100" stroke-dasharray="1 1.600"/><path d="M7.500 10.300 L17.700 5 V15.500 L7.700 20.300 Z" stroke="#000" stroke-width="1.400" fill="#fffaf0"/><path d="M11 12 h1 M14 10.500 h1 M12.500 14.500 h1" stroke="#444"/></g></svg></div>
<div class="rb" style="left:2px;top:135px;width:28px;height:29px;background:#cdcdcd"><svg width="27" height="27" viewBox="0 0 27 27" style="left:-0.500px;top:0px"><rect x="1" y="1" width="25" height="4" fill="#9ab0d0"/><rect x="2" y="1.500" width="2.500" height="2" fill="#f0f000"/><rect x="3" y="2.500" width="3" height="2.200" fill="#00e000"/><path d="M8.500 1.500 V4.500 M10.500 1.500 V4.500 M12.500 1.500 V4.500 M14.500 1.500 V4.500 M16.500 1.500 V4.500 M18.500 1.500 V4.500 M20.500 1.500 V4.500" stroke="#e4e8f0" stroke-width="1"/><rect x="22.500" y="1.500" width="3" height="3" fill="#e8e8e8"/><rect x="23.500" y="2.500" width="1" height="1" fill="#555"/><g fill="#d8d8d8" stroke="#333" stroke-width="0.900" stroke-linejoin="round"><path d="M6 14.500 L17 8 L21 10 V19 L10 25.500 L6.500 22 Z"/><path d="M6 14.500 L9.500 17 L21 10 M9.500 17 L10 25.500" fill="none"/><path d="M12 18.500 V23 M12 20 L20 15.500" fill="none"/></g></svg></div>
<div class="rb" style="left:2px;top:195px;width:28px;height:29px;background:#cdcdcd"><svg width="27" height="27" viewBox="0 0 27 27" style="left:-0.500px;top:0px"><rect x="1" y="1" width="25" height="4" fill="#9ab0d0"/><rect x="2" y="1.500" width="2.500" height="2" fill="#f0f000"/><rect x="3" y="2.500" width="3" height="2.200" fill="#00e000"/><path d="M8.500 1.500 V4.500 M10.500 1.500 V4.500 M12.500 1.500 V4.500 M14.500 1.500 V4.500 M16.500 1.500 V4.500 M18.500 1.500 V4.500 M20.500 1.500 V4.500" stroke="#e4e8f0" stroke-width="1"/><rect x="22.500" y="1.500" width="3" height="3" fill="#e8e8e8"/><rect x="23.500" y="2.500" width="1" height="1" fill="#555"/><g fill="none" stroke="#222" stroke-width="0.900"><path d="M7 10.500 C11 8.500 14 11 22 8 M6 14 C10 12 14 14.500 21 11.500 M5 18 C9 16 14 18.500 20 15 M4.500 21.500 C8 20 13 22 19 18.500 M7 10.500 C6 15 7 18 4.500 21.500 M11 10 C10 14 11 18 9 21.500 M15 10.500 C14 14 15 18 13 21.500 M18.500 9.500 C17.500 13 18.500 16 16.500 20 M22 8 C21 12 22 15 19 18.500"/></g></svg></div>
<div class="rb" style="left:2px;top:225px;width:28px;height:29px;background:#cdcdcd"><svg width="27" height="27" viewBox="0 0 27 27" style="left:-0.500px;top:0px"><rect x="1" y="1" width="25" height="4" fill="#9ab0d0"/><rect x="2" y="1.500" width="2.500" height="2" fill="#f0f000"/><rect x="3" y="2.500" width="3" height="2.200" fill="#00e000"/><path d="M8.500 1.500 V4.500 M10.500 1.500 V4.500 M12.500 1.500 V4.500 M14.500 1.500 V4.500 M16.500 1.500 V4.500 M18.500 1.500 V4.500 M20.500 1.500 V4.500" stroke="#e4e8f0" stroke-width="1"/><rect x="22.500" y="1.500" width="3" height="3" fill="#e8e8e8"/><rect x="23.500" y="2.500" width="1" height="1" fill="#555"/><g style="filter:grayscale(1)"><rect x="4" y="7.500" width="5.500" height="10" fill="#fff"/><path d="M8.500 17.500 V22.500 H13" stroke="#333" fill="none"/><rect x="13" y="18.500" width="11" height="6" fill="#fff"/><text x="13.800" y="23.800" font-size="6.500" font-family="Liberation Sans,sans-serif" font-weight="bold" fill="#222">12.</text><text x="0" y="0" font-size="6.500" font-family="Liberation Sans,sans-serif" font-weight="bold" fill="#222" transform="translate(9,17.300) rotate(-90)">24.</text></g></svg></div>
<div class="rb" style="left:2px;top:285px;width:28px;height:29px;background:#cdcdcd"><svg width="27" height="27" viewBox="0 0 27 27" style="left:-0.500px;top:0px"><rect x="1" y="1" width="25" height="4" fill="#9ab0d0"/><rect x="2" y="1.500" width="2.500" height="2" fill="#f0f000"/><rect x="3" y="2.500" width="3" height="2.200" fill="#00e000"/><path d="M8.500 1.500 V4.500 M10.500 1.500 V4.500 M12.500 1.500 V4.500 M14.500 1.500 V4.500 M16.500 1.500 V4.500 M18.500 1.500 V4.500 M20.500 1.500 V4.500" stroke="#e4e8f0" stroke-width="1"/><rect x="22.500" y="1.500" width="3" height="3" fill="#e8e8e8"/><rect x="23.500" y="2.500" width="1" height="1" fill="#555"/><g fill="none" stroke="#222" stroke-width="0.800" stroke-linejoin="bevel"><path d="M5 22.500 L6.500 21.700 L6 15.500 L8.500 20.600 L8 14.400 L10.500 19.500 L10 13.300 L12.500 18.400 L12 12.200 L14.500 17.300 L14 11.100 L16.500 16.200 L16 10 L18.500 15.100 L18 9.500 L20 14.200 L21.500 13.500"/><path d="M4 22.300 h1.600 v1.600 h-1.600z M21 12.600 h1.600 v1.600 h-1.600z" fill="#222" stroke="none"/></g></svg></div>
<div style="left:1309px;top:99px;width:15px;height:703px;background:#c0c0c0"></div>
<div style="left:1312px;top:111px;width:9px;height:677px;background:linear-gradient(90deg,#d6d6d6 0,#d6d6d6 2px,#b0b0b0 2px,#b0b0b0 3px,#8c8c8c 3px,#8c8c8c 6px,#b8b8b8 6px,#b8b8b8 7px,#d6d6d6 7px)"></div>
<div class="rb1" style="left:1310px;top:99px;width:14px;height:13px;background:#e0e0e0"></div><div class="arr" style="left:1312.5px;top:103px;border-width:0 4.5px 5px 4.5px;border-color:transparent transparent #000 transparent"></div>
<div class="rb1" style="left:1310px;top:788px;width:14px;height:14px;background:#e0e0e0"></div><div class="arr" style="left:1312.5px;top:793px;border-width:5px 4.5px 0 4.5px;border-color:#000 transparent transparent transparent"></div>
<div class="rb1" style="left:1310px;top:207px;width:14px;height:492px;background:#e4e4e4;border-right:2px solid #888;border-bottom:2px solid #888"></div>
<div style="left:36px;top:804px;width:1271px;height:15px;background:#c6c6c6"></div>
<div style="left:48px;top:806px;width:1245px;height:11px;background:linear-gradient(180deg,#d6d6d6 0,#d6d6d6 2px,#b8b8b8 2px,#b8b8b8 4px,#8c8c8c 4px,#8c8c8c 6px,#c0c0c0 6px,#c0c0c0 9px,#9a9a9a 9px,#9a9a9a 10px,#d0d0d0 10px)"></div>
<div class="rb1" style="left:35px;top:805px;width:14px;height:14px;background:#e0e0e0"></div><div class="arr" style="left:39px;top:807.500px;border-width:4.500px 6px 4.500px 0;border-color:transparent #000 transparent transparent"></div>
<div class="rb1" style="left:1293px;top:805px;width:14px;height:14px;background:#e0e0e0"></div><div class="arr" style="left:1297px;top:807.500px;border-width:4.500px 0 4.500px 6px;border-color:transparent transparent transparent #000"></div>
<div class="rb1" style="left:160px;top:805px;width:1033px;height:14px;background:#e4e4e4;border-right:2px solid #888;border-bottom:2px solid #888"></div>
<style>.stt{font-size:10px;line-height:12px;white-space:nowrap;color:#000;letter-spacing:0.14px}</style>
<div style="left:3px;top:822px;width:325px;height:14px;background:#e2e2e2;border-top:1px solid #707070;border-left:1px solid #707070;border-right:1px solid #fff;border-bottom:1px solid #fff"><span class="stt" style="left:2.500px;top:-1.300px">Vorstatik-Räumlich</span></div>
<div style="left:330px;top:822px;width:323px;height:14px;background:#e2e2e2;border-top:1px solid #707070;border-left:1px solid #707070;border-right:1px solid #fff;border-bottom:1px solid #fff"><span class="stt" style="left:2.500px;top:-1.300px">Ebene: Überbau</span></div>
<div style="left:655px;top:822px;width:326px;height:14px;background:#e2e2e2;border-top:1px solid #707070;border-left:1px solid #707070;border-right:1px solid #fff;border-bottom:1px solid #fff"><span class="stt" style="left:2.500px;top:-1.300px">Zusammenfassung Nachweis</span></div>
<div style="left:983px;top:822px;width:323px;height:14px;background:#e2e2e2;border-top:1px solid #707070;border-left:1px solid #707070;border-right:1px solid #fff;border-bottom:1px solid #fff"><span class="stt" style="left:2.500px;top:-1.300px"></span></div>
<div class="rb1" style="left:1310px;top:822px;width:14px;height:14px;background:#e0e0e0"></div><div style="left:1314px;top:823px;width:5px;height:5px;border-radius:3px;background:#e00000"></div><div style="left:1314px;top:827.500px;width:5px;height:5px;border-radius:3px;background:#0040e0"></div>
</body></html>
